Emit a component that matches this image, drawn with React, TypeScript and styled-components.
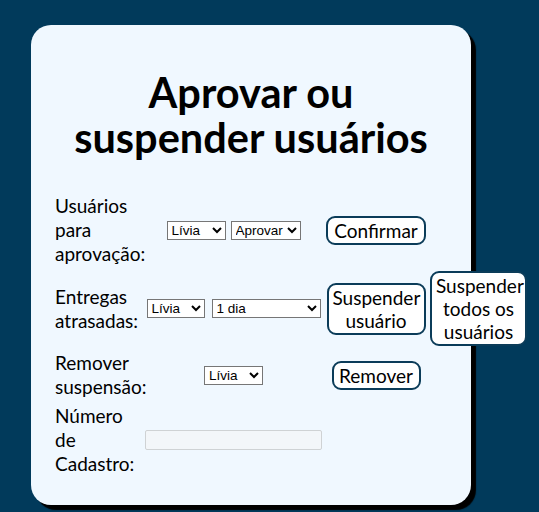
import React from "react";
import styled, { createGlobalStyle } from "styled-components";

const Global = createGlobalStyle`
  html, body { margin: 0; padding: 0; background: #013a5b; }
  body { font-family: "Lato", "Noto Sans", sans-serif; color: #000; }
`;

const Page = styled.div`
  min-height: 512px;
  padding: 25px 0 0 31px;
  box-sizing: border-box;
`;

const Card = styled.main`
  width: 440px;
  box-sizing: border-box;
  background: #f0f8ff;
  border-radius: 20px;
  box-shadow: 5px 5px 1px #000;
  padding: 45px 0 29px 0;
`;

const Title = styled.h1`
  margin: 0 0 34px 0;
  text-align: center;
  font-size: 41.5px;
  line-height: 45px;
  font-weight: 700;
`;

const Grid = styled.div`
  margin-left: 24px;
  display: grid;
  grid-template-columns: 86px 177px 100px 97px;
  column-gap: 4px;
  row-gap: 5px;
  align-items: center;
`;

const Label = styled.div`
  font-size: 19px;
  line-height: 24px;
`;

const Controls = styled.div<{ $gap?: number }>`
  display: flex;
  justify-content: center;
  align-items: center;
  gap: ${(p) => p.$gap ?? 5}px;
`;

const Select = styled.select<{ $w: number }>`
  width: ${(p) => p.$w}px;
  height: 19px;
  font-family: "Liberation Sans", Arial, sans-serif;
  font-size: 13.5px;
  color: #000;
  background: #fff;
  border: 1px solid #767676;
  border-radius: 0;
  padding: 0;
`;

const TextInput = styled.input`
  width: 177px;
  height: 20px;
  box-sizing: border-box;
  background: #f3f6f9;
  border: 1px solid #cfd2d4;
  border-radius: 2px;
`;

const Cell = styled.div`
  display: flex;
  justify-content: center;
  align-items: center;
`;

const Button = styled.button<{ $w: number }>`
  width: ${(p) => p.$w}px;
  box-sizing: border-box;
  font-family: "Lato", "Noto Sans", sans-serif;
  font-size: 19px;
  line-height: 23px;
  color: #000;
  background: #fff;
  border: 2px solid #0b3c59;
  border-radius: 9px;
  padding: 1px 4px;
  text-align: center;
  cursor: pointer;
`;

export default function App() {
  return (
    <>
      <Global />
      <Page>
        <Card>
          <Title>
            Aprovar ou
            <br />
            suspender usuários
          </Title>
          <Grid>
            <Label>Usuários para aprovação:</Label>
            <Controls>
              <Select $w={59} defaultValue="livia">
                <option value="livia">Lívia</option>
              </Select>
              <Select $w={70} defaultValue="aprovar">
                <option value="aprovar">Aprovar</option>
                <option value="recusar">Recusar</option>
              </Select>
            </Controls>
            <Cell>
              <Button $w={100}>Confirmar</Button>
            </Cell>
            <div />

            <Label>Entregas atrasadas:</Label>
            <Controls $gap={7}>
              <Select $w={58} defaultValue="livia">
                <option value="livia">Lívia</option>
              </Select>
              <Select $w={109} defaultValue="1">
                <option value="1">1 dia</option>
                <option value="2">2 dias</option>
              </Select>
            </Controls>
            <Cell>
              <Button $w={99}>
                Suspender
                <br />
                usuário
              </Button>
            </Cell>
            <Cell>
              <Button $w={97}>Suspender todos os usuários</Button>
            </Cell>

            <Label>Remover suspensão:</Label>
            <Controls>
              <Select $w={59} defaultValue="livia">
                <option value="livia">Lívia</option>
              </Select>
            </Controls>
            <Cell>
              <Button $w={89}>Remover</Button>
            </Cell>
            <div />

            <Label>Número de Cadastro:</Label>
            <Controls>
              <TextInput type="text" disabled />
            </Controls>
            <div />
            <div />
          </Grid>
        </Card>
      </Page>
    </>
  );
}
